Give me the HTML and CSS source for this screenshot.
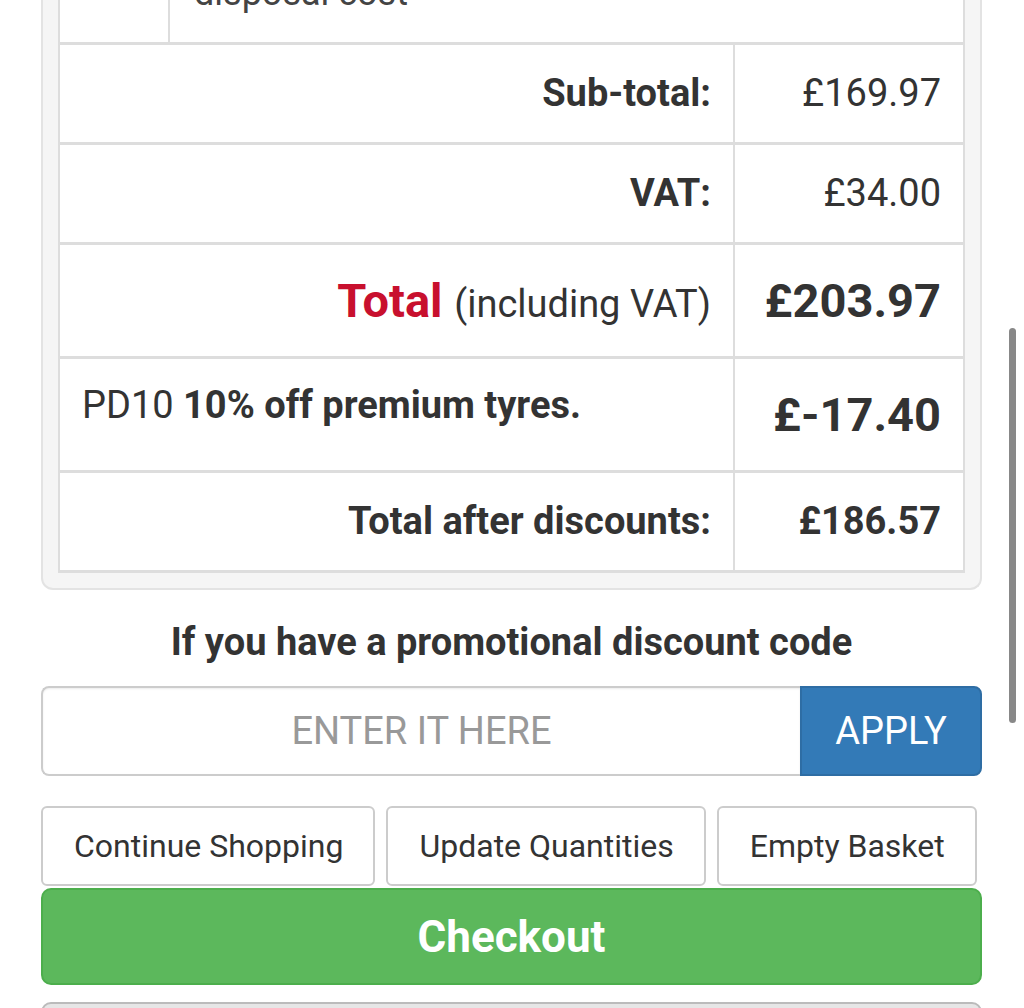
FILE: index.html
```html
<!DOCTYPE html>
<html>
<head>
<meta charset="utf-8">
<link rel="stylesheet" href="styles.css">
</head>
<body>
<div class="page">
  <div class="panel">
    <table class="basket">
      <tr class="item-row">
        <td class="thumb"></td>
        <td class="desc" colspan="2"><span class="cut">disposal cost</span></td>
      </tr>
      <tr>
        <td class="label" colspan="2"><b>Sub-total:</b></td>
        <td class="value">£169.97</td>
      </tr>
      <tr>
        <td class="label" colspan="2"><b>VAT:</b></td>
        <td class="value">£34.00</td>
      </tr>
      <tr class="big">
        <td class="label" colspan="2"><b class="red">Total</b> <span class="sub">(including VAT)</span></td>
        <td class="value"><b>£203.97</b></td>
      </tr>
      <tr class="big">
        <td class="promo" colspan="2">PD10 <b>10% off premium tyres.</b></td>
        <td class="value"><b>£-17.40</b></td>
      </tr>
      <tr>
        <td class="label" colspan="2"><b>Total after discounts:</b></td>
        <td class="value"><b>£186.57</b></td>
      </tr>
    </table>
  </div>

  <h3 class="promo-title">If you have a promotional discount code</h3>

  <div class="input-group">
    <input class="code" type="text" placeholder="ENTER IT HERE">
    <button class="apply">APPLY</button>
  </div>

  <div class="actions">
    <button class="btn">Continue Shopping</button>
    <button class="btn">Update Quantities</button>
    <button class="btn">Empty Basket</button>
  </div>

  <button class="checkout">Checkout</button>

  <div class="next-box"></div>
</div>
<div class="scrollbar"></div>
</body>
</html>
```

FILE: styles.css
```css
html, body {
  margin: 0;
  padding: 0;
  background: #fff;
  overflow: hidden;
}
body {
  font-family: Roboto, "Liberation Sans", sans-serif;
  color: #333;
  font-size: 38px;
}
.page {
  padding: 0 42px 0 41px;
  margin-top: -22px;
}
.panel {
  background: #f5f5f5;
  border: 2px solid #e3e3e3;
  border-top: none;
  border-radius: 0 0 12px 12px;
  padding: 0 15px 15px 15px;
}
.basket {
  width: 100%;
  border-collapse: collapse;
  background: #fff;
  border: 2px solid #ddd;
  border-top: none;
}
.basket td {
  border: 2px solid #ddd;
  border-width: 3px 2px;
  padding: 24px 22px;
  line-height: 49px;
}
.item-row td {
  border-top: none;
  height: 56px;
  padding: 0;
  vertical-align: bottom;
}
.thumb { width: 108px; }
.cut {
  display: block;
  font-size: 36px;
  line-height: 30px;
  margin-bottom: 34px;
  padding-left: 24px;
  color: #444;
}
.label { text-align: right; }
.value {
  text-align: right;
  width: 184px;
}
.basket .big td {
  padding: 28px 22px;
  font-size: 47px;
  line-height: 55px;
}
.big .sub {
  font-size: 38px;
  line-height: 1;
}
.red { color: #c8102e; }
.basket .big .promo {
  font-size: 38px;
  vertical-align: top;
  padding-top: 22px;
  line-height: 48px;
}
.promo-title {
  font-size: 38px;
  font-weight: 700;
  text-align: center;
  margin: 28px 0 20px 0;
  line-height: 48px;
}
.input-group {
  display: flex;
  height: 90px;
}
.code {
  box-sizing: border-box;
  flex: 1;
  min-width: 0;
  height: 90px;
  border: 2px solid #ccc;
  border-right: none;
  border-radius: 8px 0 0 8px;
  font-family: Roboto, "Liberation Sans", sans-serif;
  font-size: 38px;
  text-align: center;
  color: #555;
  padding: 0;
  box-shadow: inset 0 1px 2px rgba(0,0,0,0.08);
}
.code::placeholder { color: #999; }
.apply {
  box-sizing: border-box;
  width: 182px;
  height: 90px;
  background: #337ab7;
  border: 2px solid #2e6da4;
  border-radius: 0 8px 8px 0;
  color: #fff;
  font-family: Roboto, "Liberation Sans", sans-serif;
  font-size: 38px;
  padding: 0;
}
.actions {
  display: flex;
  gap: 11px;
  margin-top: 30px;
}
.btn {
  box-sizing: border-box;
  flex: none;
  white-space: nowrap;
  height: 80px;
  background: #fff;
  border: 2px solid #ccc;
  border-radius: 6px;
  padding: 0 30px 0 31px;
  font-family: Roboto, "Liberation Sans", sans-serif;
  font-size: 32px;
  color: #333;
}
.checkout {
  box-sizing: border-box;
  display: block;
  width: 100%;
  height: 97px;
  margin-top: 2px;
  background: #5cb85c;
  border: 2px solid #4cae4c;
  border-radius: 10px;
  color: #fff;
  font-family: Roboto, "Liberation Sans", sans-serif;
  font-size: 44px;
  font-weight: 700;
}
.next-box {
  margin-top: 17px;
  height: 60px;
  background: #e6e6e6;
  border: 2px solid #bbb;
  border-radius: 10px;
}
.scrollbar {
  position: fixed;
  left: 1009px;
  top: 328px;
  width: 7px;
  height: 395px;
  border-radius: 4px;
  background: #888;
}
```
